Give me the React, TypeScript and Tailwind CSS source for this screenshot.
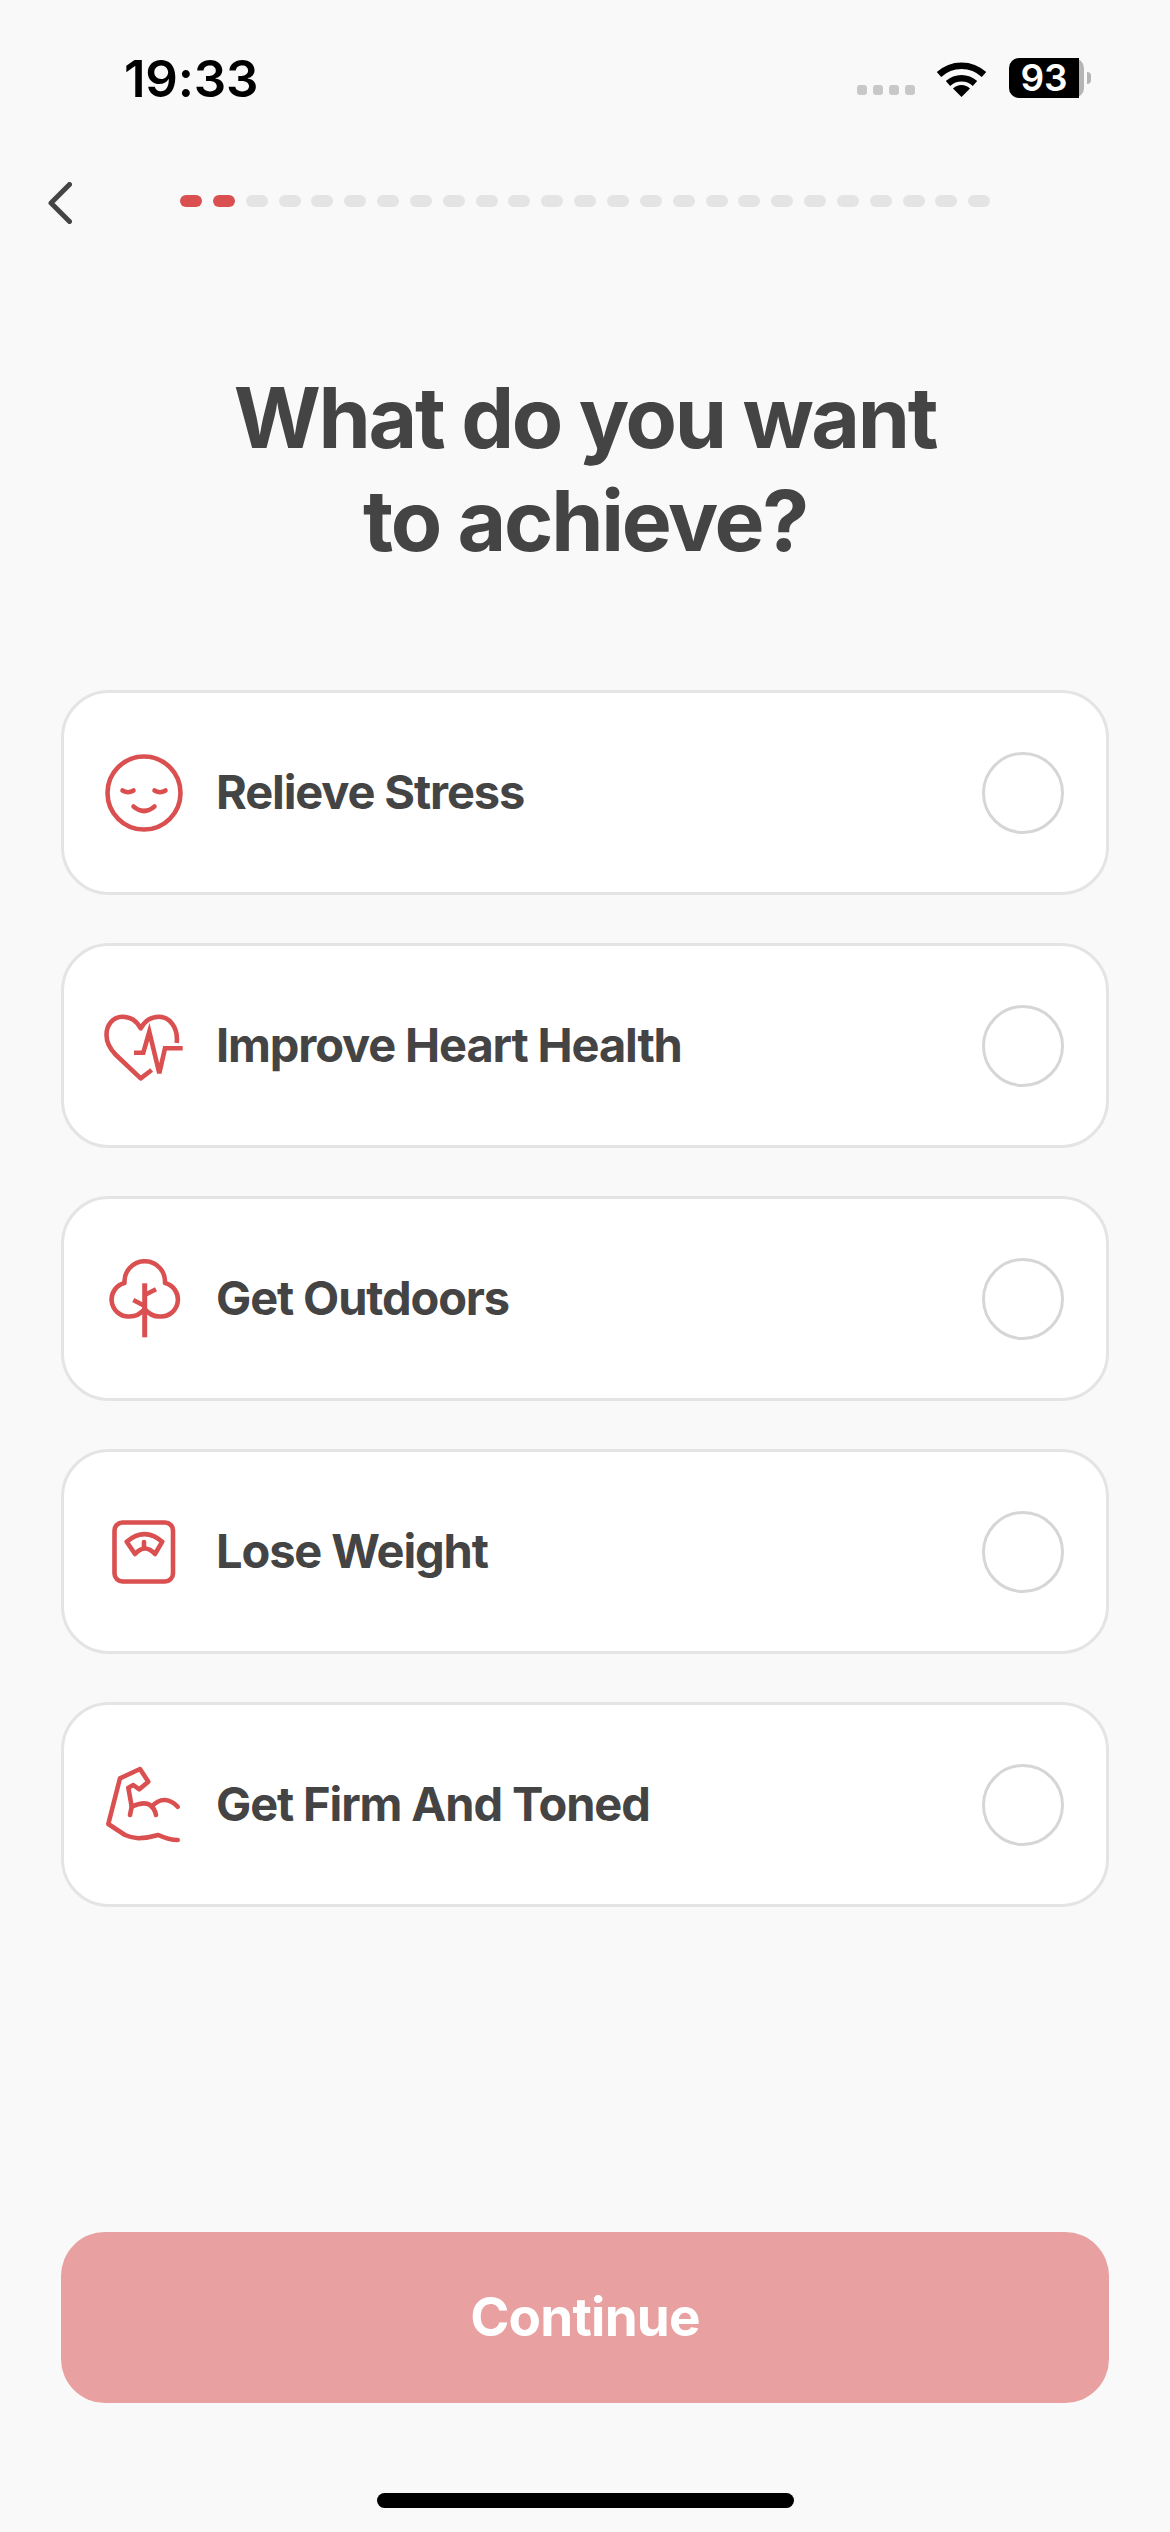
import { ReactNode } from 'react';

const RED = '#da4f4f';

function Icon({ children }: { children: ReactNode }) {
  return (
    <svg
      width="80"
      height="80"
      viewBox="0 0 80 80"
      fill="none"
      stroke={RED}
      strokeWidth="4.6"
      strokeLinecap="round"
      strokeLinejoin="round"
      className="shrink-0"
    >
      {children}
    </svg>
  );
}

const goals: { label: string; icon: ReactNode }[] = [
  {
    label: 'Relieve Stress',
    icon: (
      <>
        <circle cx="40" cy="40" r="36.5" />
        <path d="M18.5 37.5q5.5 3.5 11 0" />
        <path d="M50.5 37.5q5.5 3.5 11 0" />
        <path d="M29.5 53.5q10.5 9 21 0" />
      </>
    ),
  },
  {
    label: 'Improve Heart Health',
    icon: (
      <>
        <path
          strokeLinecap="butt"
          d="M72.7 37C74.5 21 65 10.7 55 10.7C47 10.7 40.5 15.5 36.7 22.3C33 15.5 26.5 10.7 18.5 10.7C9 10.7 2.5 19 2.5 29C2.5 37 6 43 12 49L36.7 72.3L47.7 64"
        />
        <path
          strokeLinecap="butt"
          strokeLinejoin="miter"
          d="M30 46.7H39.3L45.3 25.7L55.3 67.3L61 42.3H78.7"
        />
      </>
    ),
  },
  {
    label: 'Get Outdoors',
    icon: (
      <>
        <path d="M40.7 50Q34 58 24.5 57.5A17 17 0 0 1 20.5 24A20.3 20.3 0 1 1 61 24A17 17 0 0 1 57 57.5Q47 58 40.7 50Z" />
        <path strokeLinecap="butt" strokeWidth="5" d="M40.7 24.3V78.3" />
        <path strokeLinecap="butt" d="M29.3 41L40.7 47" />
        <path strokeLinecap="butt" d="M40.7 36L52 30.3" />
      </>
    ),
  },
  {
    label: 'Lose Weight',
    icon: (
      <>
        <rect x="10.5" y="10.5" width="58.5" height="59" rx="8" />
        <path d="M22.7 29.7Q40.5 14.5 58.3 29.7L51 42Q41 31 31 42Z" />
        <path d="M40 30V36" />
      </>
    ),
  },
  {
    label: 'Get Firm And Toned',
    icon: (
      <>
        <path d="M73.7 75Q65 75 54.3 70Q44 73 34.3 73.3Q28 73 21 70L4.3 59L16 13.3L36 4L44.3 16.7L35.3 24.3L29.3 20L24.3 22.7L27.7 41.7L26 50" />
        <path d="M27.7 41.7Q40 36 46 40Q50.5 43 52 50" />
        <path d="M47.7 41.7Q54 34.5 61 35Q68 35.5 73.7 41.7" />
      </>
    ),
  },
];

function StatusBar() {
  return (
    <div className="flex h-[156px] items-center justify-between pl-[124px] pr-[79px]">
      <span className="text-[51px] leading-none font-semibold tracking-[-0.005em] text-black">19:33</span>
      <div className="flex items-center">
        <div className="mt-[24px] flex gap-[6px]">
          {[0, 1, 2, 3].map((i) => (
            <div key={i} className="h-[10px] w-[10px] rounded-[3px] bg-[#c8c8c8]" />
          ))}
        </div>
        <svg width="51" height="37" viewBox="0 0 51 37" className="ml-[21px]">
          <path d="M3 14.5A33 33 0 0 1 48 14.5" fill="none" stroke="#000" strokeWidth="6.5" />
          <path d="M12 23.5A20 20 0 0 1 39 23.5" fill="none" stroke="#000" strokeWidth="6.5" />
          <path d="M25.5 37L17 28.5A12 12 0 0 1 34 28.5Z" fill="#000" />
        </svg>
        <div className="ml-[22px] flex h-[40px] w-[75px] items-center rounded-[10px] bg-[#b5b5b5]">
          <div className="flex h-full w-[70px] items-center justify-center rounded-l-[10px] bg-black text-[37px] leading-[40px] font-semibold text-white">
            93
          </div>
        </div>
        <div className="ml-[3px] h-[12px] w-[4px] rounded-r-full bg-[#b5b5b5]" />
      </div>
    </div>
  );
}

function Progress() {
  return (
    <div className="flex h-[90px] items-center pl-[48px]">
      <svg width="24" height="42" viewBox="0 0 24 42" fill="none" stroke="#444" strokeWidth="5" strokeLinecap="round" strokeLinejoin="round" className="mt-[3px]">
        <path d="M21.5 2.5L3 21L21.5 39.5" />
      </svg>
      <div className="ml-[108px] flex gap-[10.85px]">
        {Array.from({ length: 25 }).map((_, i) => (
          <div key={i} className={`h-[12px] w-[22px] rounded-full ${i < 2 ? 'bg-[#da4f4f]' : 'bg-[#e4e4e4]'}`} />
        ))}
      </div>
    </div>
  );
}

export default function App() {
  return (
    <div className="flex h-[2532px] w-[1170px] flex-col overflow-hidden bg-[#f9f9f9] font-['Inter',sans-serif] text-[#444444]">
      <StatusBar />
      <Progress />

      <h1 className="mt-[120px] text-center text-[84px] leading-[103px] font-bold tracking-[-0.027em]">
        What do you want
        <br />
        to achieve?
      </h1>

      <div className="mx-[61px] mt-[118px] flex flex-col gap-[48px]">
        {goals.map((goal) => (
          <div
            key={goal.label}
            className="flex h-[205px] items-center rounded-[48px] border-[3px] border-[#e4e4e4] bg-white pl-[40px] pr-[42px]"
          >
            <Icon>{goal.icon}</Icon>
            <span className="ml-[32px] flex-1 text-[47px] font-bold tracking-[-0.024em]">{goal.label}</span>
            <div className="h-[82px] w-[82px] rounded-full border-[3px] border-[#d6d6d6]" />
          </div>
        ))}
      </div>

      <div className="mx-[61px] mt-auto flex h-[171px] items-center justify-center rounded-[44px] bg-[#e8a0a0] text-[53px] font-bold tracking-[-0.015em] text-white">
        Continue
      </div>
      <div className="mx-auto mt-[90px] mb-[24px] h-[15px] w-[417px] rounded-full bg-black" />
    </div>
  );
}
